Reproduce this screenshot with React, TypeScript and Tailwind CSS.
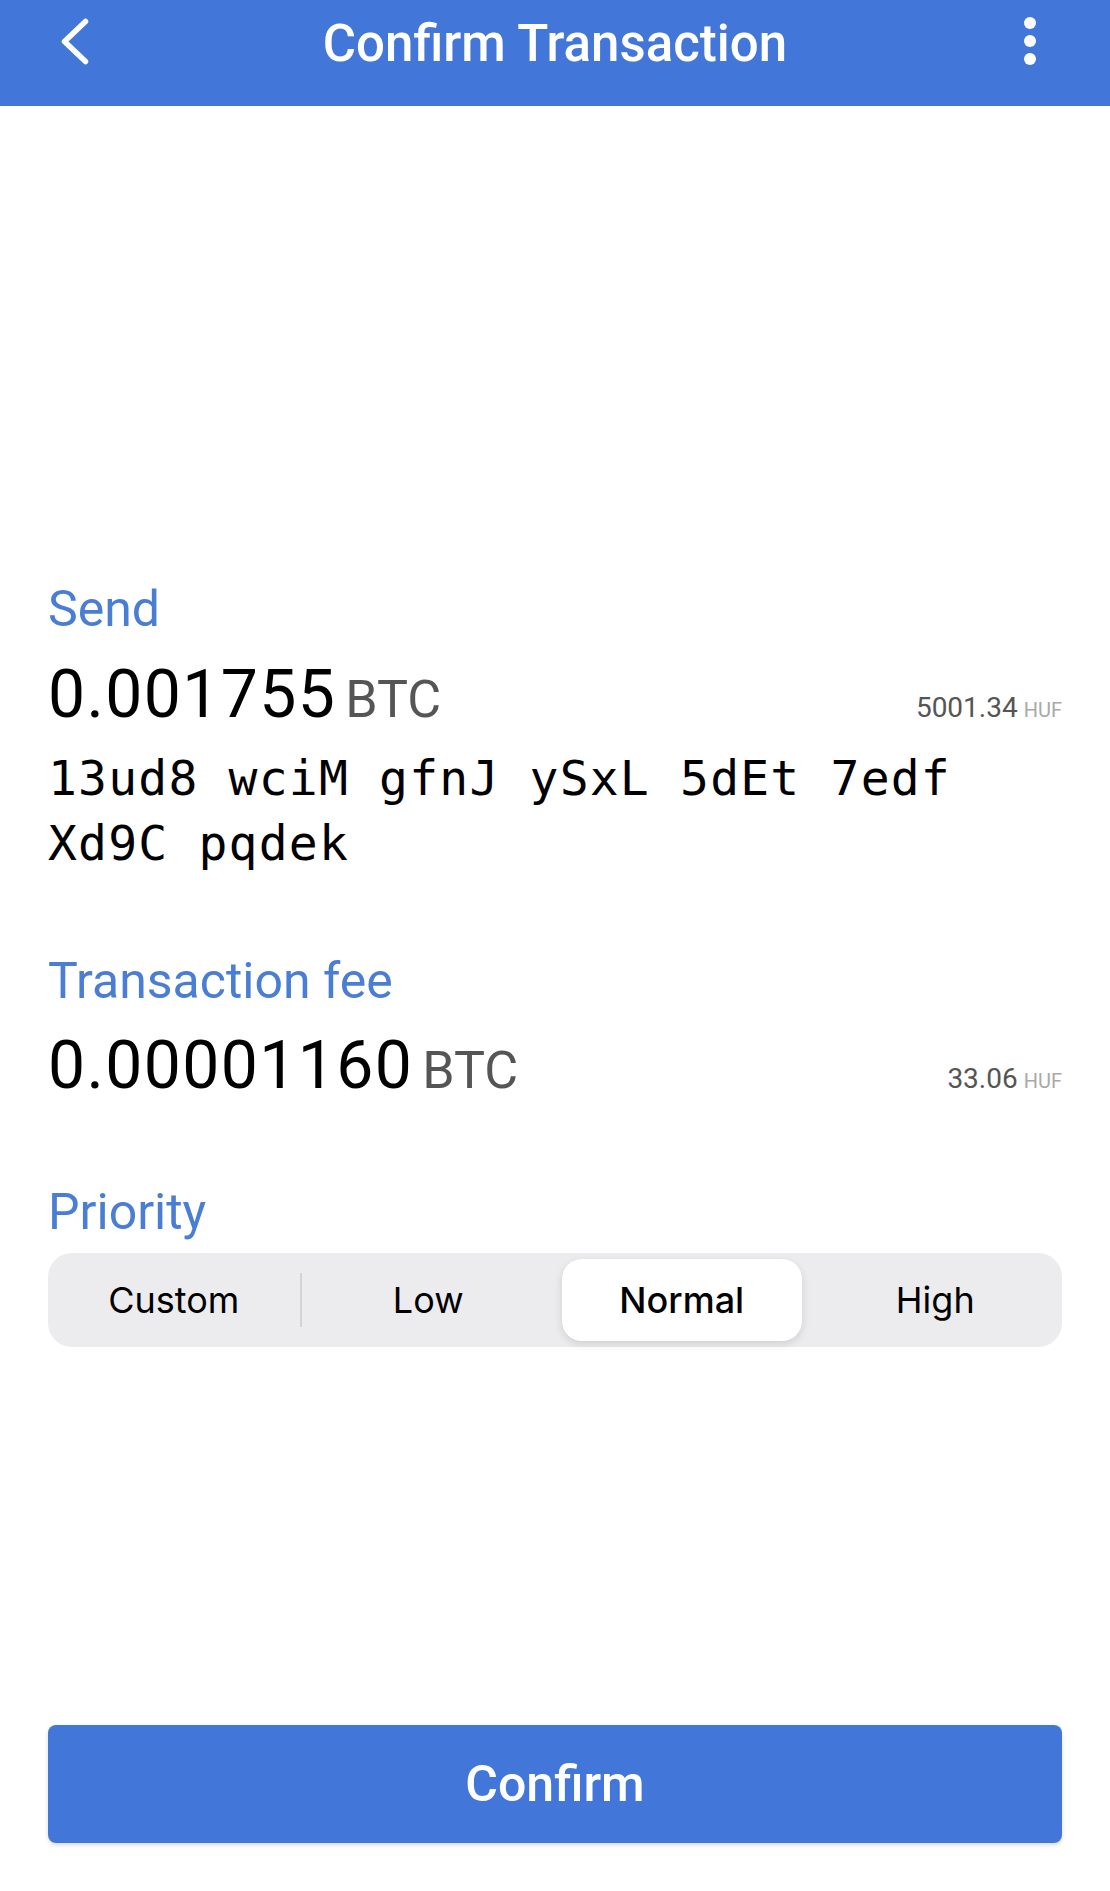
import { useState } from 'react';

const priorities = ['Custom', 'Low', 'Normal', 'High'];

function BackIcon() {
  return (
    <svg width="32" height="48" viewBox="0 0 32 48" fill="none">
      <path
        d="M27.5 4.5 L6.5 24.5 L27.5 44.5"
        stroke="white"
        strokeWidth="5.5"
        strokeLinecap="round"
        strokeLinejoin="round"
      />
    </svg>
  );
}

function MoreIcon() {
  return (
    <div className="flex flex-col gap-[6px]">
      <span className="block w-[12px] h-[12px] rounded-full bg-white" />
      <span className="block w-[12px] h-[12px] rounded-full bg-white" />
      <span className="block w-[12px] h-[12px] rounded-full bg-white" />
    </div>
  );
}

function Amount({ value, fiat }: { value: string; fiat: string }) {
  return (
    <div className="flex items-baseline justify-between">
      <div className="flex items-baseline">
        <span className="text-[66px] leading-none tracking-[1.4px] text-black">{value}</span>
        <span className="ml-[9px] text-[52px] leading-none text-[#555555]">BTC</span>
      </div>
      <div className="flex items-baseline">
        <span className="text-[28px] leading-none text-[#555555]">{fiat}</span>
        <span className="ml-[6px] text-[20px] leading-none text-[#a9a9a9]">HUF</span>
      </div>
    </div>
  );
}

export default function App() {
  const [priority, setPriority] = useState('Normal');

  return (
    <div className="min-h-screen flex flex-col bg-white font-[Roboto,sans-serif]">
      <header className="h-[106px] bg-[#4277d9]">
        <div className="h-[82px] grid grid-cols-[1fr_auto_1fr] items-center">
          <div className="pl-[58px] flex items-center">
            <BackIcon />
          </div>
          <h1 className="pt-[5px] text-[51px] font-medium leading-none text-white">Confirm Transaction</h1>
          <div className="pr-[74px] flex justify-end">
            <MoreIcon />
          </div>
        </div>
      </header>

      <main className="flex-1 flex flex-col px-[48px]">
        <div className="mt-[478px] text-[50px] leading-none text-[#4a7dd4]">Send</div>
        <div className="mt-[28px]">
          <Amount value="0.001755" fiat="5001.34" />
        </div>
        <p className="mt-[18px] font-['DejaVu_Sans_Mono',monospace] text-[48px] leading-[65px] tracking-[1.2px] text-black">
          13ud8 wciM gfnJ ySxL 5dEt 7edf Xd9C pqdek
        </p>

        <div className="mt-[80px] text-[50px] leading-none text-[#4a7dd4]">Transaction fee</div>
        <div className="mt-[27px]">
          <Amount value="0.00001160" fiat="33.06" />
        </div>

        <div className="mt-[88px] text-[50px] leading-none text-[#4a7dd4]">Priority</div>
        <div className="mt-[16px] h-[94px] rounded-[24px] bg-[#ececee] py-[6px] grid grid-cols-4 font-[Inter,sans-serif] text-[36px] text-black">
          {priorities.map((p) => {
            const selected = p === priority;
            const divider = p === 'Custom';
            return (
              <button
                key={p}
                onClick={() => setPriority(p)}
                className={
                  selected
                    ? 'mx-[7px] flex items-center justify-center rounded-[20px] bg-white font-medium shadow-[0_3px_8px_rgba(0,0,0,0.12)]'
                    : divider
                      ? 'my-[14px] flex items-center justify-center border-r-2 border-[#d4d4d6]'
                      : 'flex items-center justify-center'
                }
              >
                {p}
              </button>
            );
          })}
        </div>

        <button className="mt-auto mb-[48px] h-[118px] rounded-[8px] bg-[#4277d9] text-[50px] font-medium text-white shadow-[0_2px_4px_rgba(0,0,0,0.15)]">
          Confirm
        </button>
      </main>
    </div>
  );
}
